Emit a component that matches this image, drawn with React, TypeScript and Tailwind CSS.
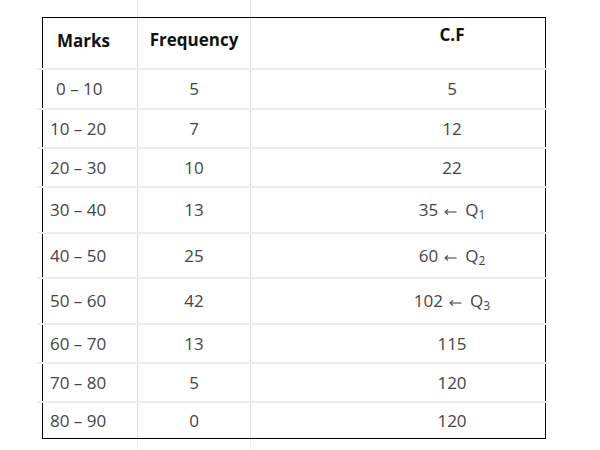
const rows: { marks: string; freq: string; cf: string; q?: string; h: string; first?: boolean }[] = [
  { marks: '0 – 10', freq: '5', cf: '5', h: 'h-[38px]', first: true },
  { marks: '10 – 20', freq: '7', cf: '12', h: 'h-[37px]' },
  { marks: '20 – 30', freq: '10', cf: '22', h: 'h-[37px]' },
  { marks: '30 – 40', freq: '13', cf: '35', q: '1', h: 'h-[44px]' },
  { marks: '40 – 50', freq: '25', cf: '60', q: '2', h: 'h-[43px]' },
  { marks: '50 – 60', freq: '42', cf: '102', q: '3', h: 'h-[44px]' },
  { marks: '60 – 70', freq: '13', cf: '115', h: 'h-[37px]' },
  { marks: '70 – 80', freq: '5', cf: '120', h: 'h-[37px]' },
  { marks: '80 – 90', freq: '0', cf: '120', h: 'h-[35px]' },
];

const Sep = () => <div className="-ml-[6px] -mr-[4px] h-[2px] bg-[#ececec]" />;

const Arrow = () => (
  <svg width="13" height="8" viewBox="0 0 13 8" className="ml-[6px] mr-[8px] mt-[4px]" fill="none">
    <path d="M1 4H12.5" stroke="#555" strokeWidth="1.2" />
    <path d="M4 1.5L1 4L4 6.5" stroke="#555" strokeWidth="1.2" />
  </svg>
);

export default function App() {
  return (
    <div
      className="h-[450px] w-[600px] overflow-hidden bg-white text-[17px] text-[#444]"
      style={{ fontFamily: '"Open Sans", "Noto Sans", sans-serif' }}
    >
      {/* grid lines above the table */}
      <div className="ml-[43px] grid h-[17px] w-[502px] grid-cols-[95px_113px_1fr]">
        <div className="border-r border-[#e2e2e2]" />
        <div className="border-r border-[#e2e2e2]" />
        <div />
      </div>

      <div className="ml-[42px] w-[504px] border border-black">
        <div className="grid h-[50px] grid-cols-[95px_113px_1fr] font-bold text-[#111]">
          <div className="flex items-center border-r border-[#dcdcdc] pb-[4px] pl-[14px]">Marks</div>
          <div className="flex items-center justify-center border-r border-[#dcdcdc] pb-[6px]">Frequency</div>
          <div className="flex items-center justify-center pb-[16px] pl-[108px]">C.F</div>
        </div>
        {rows.map((r, i) => (
          <div key={i}>
            <Sep />
            <div className={`grid grid-cols-[95px_113px_1fr] ${r.h}`}>
              <div className={`flex items-center border-r border-[#dcdcdc] ${r.first ? 'pl-[13px]' : 'pl-[7px]'}`}>
                {r.marks}
              </div>
              <div className="flex items-center justify-center border-r border-[#dcdcdc]">{r.freq}</div>
              <div className="flex items-center justify-center pl-[108px]">
                {r.cf}
                {r.q && (
                  <>
                    <Arrow />
                    <span>
                      Q<sub className="text-[12px]">{r.q}</sub>
                    </span>
                  </>
                )}
              </div>
            </div>
          </div>
        ))}
      </div>

      {/* faint grid lines below the table */}
      <div className="ml-[43px] grid h-[12px] w-[502px] grid-cols-[95px_113px_1fr]">
        <div className="border-r border-[#f0f0f0]" />
        <div className="border-r border-[#f0f0f0]" />
        <div />
      </div>
    </div>
  );
}
